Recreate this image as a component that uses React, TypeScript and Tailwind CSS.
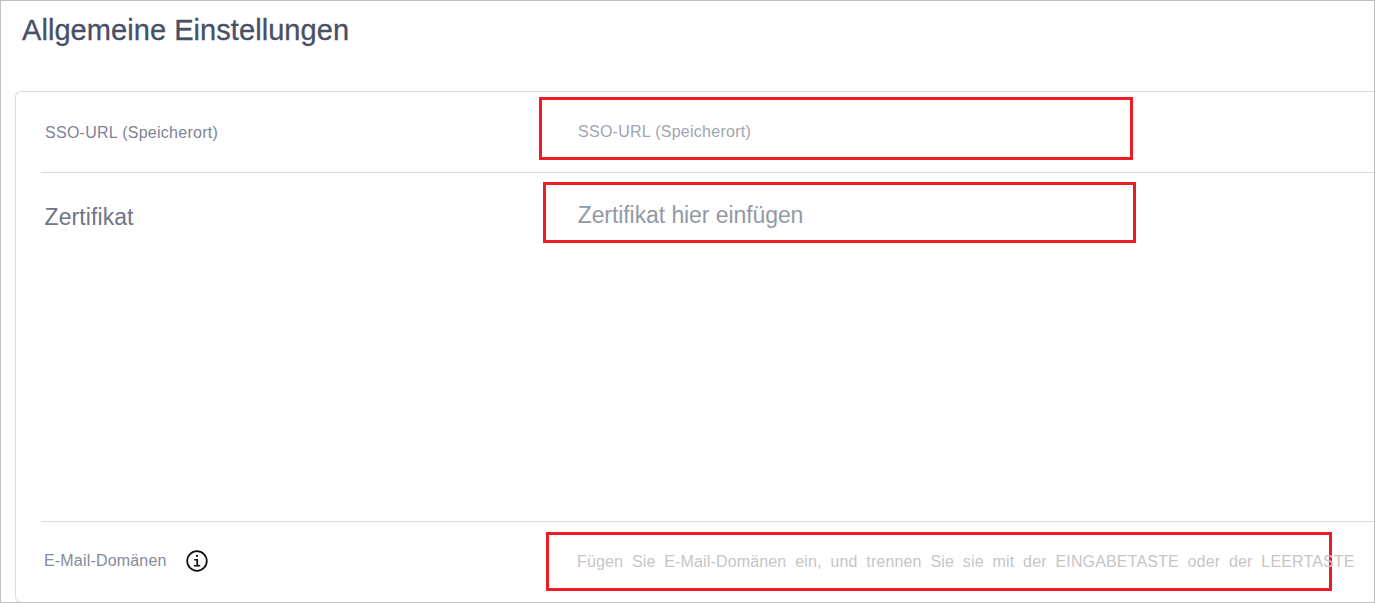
function InfoIcon() {
  return (
    <svg className="ml-[19px] mt-7 h-[22px] w-[22px] shrink-0" viewBox="0 0 22 22" fill="none">
      <circle cx="11" cy="11" r="9.8" stroke="#0c0c10" strokeWidth="1.7" />
      <path d="M10 4.9h2v1.8h-2zM8.2 9h3.9v6h2.1v1.5H7.9V15h2.5v-4.5H8.2z" fill="#0c0c10" />
    </svg>
  );
}

export default function App() {
  return (
    <main className="flex h-[603px] w-[1375px] flex-col overflow-hidden border border-[#c0c0c0] bg-white font-['Liberation_Sans',Arial,sans-serif]">
      <h1 className="h-[90px] shrink-0 pl-[21px] pt-[11px] text-[29px] leading-9 whitespace-nowrap tracking-[0.06px] text-[#475064] [-webkit-text-stroke:0.3px_#475064]">
        Allgemeine Einstellungen
      </h1>
      <section className="ml-[14px] flex h-[512px] shrink-0 flex-col rounded-l-md border-y border-l border-[#dcdde0] pl-[25px]">
        <div className="flex h-[81px] shrink-0 border-b border-[#dcdddf]">
          <div className="w-[498px] shrink-0 pl-1 pt-[29px] text-base leading-6 tracking-[0.27px] text-[#7d8494]">
            SSO-URL (Speicherort)
          </div>
          <div className="mt-[5px] h-[63px] w-[594px] border-3 border-[#ed1c24] pl-9 pt-5 text-base leading-6 tracking-[0.27px] text-[#a0a5b0]">
            SSO-URL (Speicherort)
          </div>
        </div>
        <div className="flex h-[349px] shrink-0 border-b border-[#dcdddf]">
          <div className="w-[502px] shrink-0 pl-[3.6px] pt-7 text-[23px] leading-8 tracking-[0.08px] text-[#707586]">
            Zertifikat
          </div>
          <div className="mt-[9px] h-[61px] w-[593px] border-3 border-[#ed1c24] pl-[31.7px] pt-[14px] text-[23px] leading-8 tracking-[-0.08px] text-[#929aa4]">
            Zertifikat hier einfügen
          </div>
        </div>
        <div className="flex h-20 shrink-0">
          <div className="flex w-[505px] shrink-0 pl-[3px]">
            <span className="pt-[27px] text-base leading-6 tracking-[0.18px] text-[#858b9b]">E-Mail-Domänen</span>
            <InfoIcon />
          </div>
          <div className="mt-[10px] h-[59px] w-[786px] shrink-0 border-3 border-[#ed1c24] pl-7 pt-[15px] text-base leading-6 tracking-[0.15px] whitespace-nowrap text-[#c6c6c6] [word-spacing:4.2px]">
            Fügen Sie E-Mail-Domänen ein, und trennen Sie sie mit der EINGABETASTE oder der LEERTASTE
          </div>
        </div>
      </section>
    </main>
  );
}
